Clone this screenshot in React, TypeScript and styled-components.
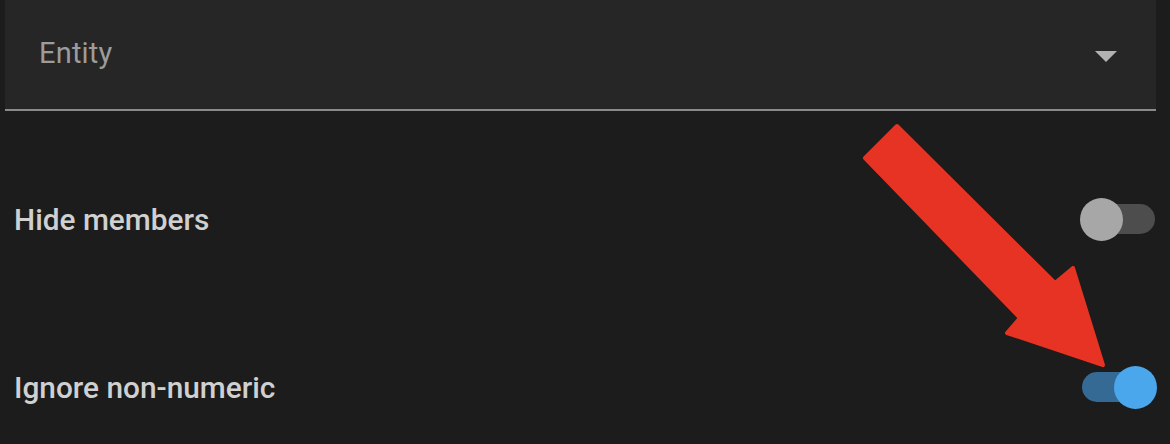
import React from "react";
import styled, { createGlobalStyle } from "styled-components";

const Global = createGlobalStyle`
  html, body { margin: 0; padding: 0; background: #1c1c1c; }
  body { font-family: Roboto, "Liberation Sans", sans-serif; }
  * { box-sizing: border-box; }
`;

const Page = styled.div`
  position: relative;
  width: 1170px;
  height: 444px;
  overflow: hidden;
  background: #1c1c1c;
  display: flex;
  flex-direction: column;
`;

const SelectField = styled.div`
  margin: 0 14px 0 5px;
  height: 111px;
  background: #262626;
  border-bottom: 2px solid #8a8a8a;
  display: flex;
  align-items: center;
  justify-content: space-between;
  padding: 0 39px 3px 34px;
`;

const SelectLabel = styled.span`
  font-size: 29px;
  color: #9c9c9c;
  letter-spacing: 0.2px;
`;

const Caret = styled.span`
  width: 0;
  height: 0;
  border-left: 11px solid transparent;
  border-right: 11px solid transparent;
  border-top: 11px solid #b3b3b3;
  margin-top: 6px;
`;

const Row = styled.div<{ $top: number }>`
  margin-top: ${(p) => p.$top}px;
  height: 60px;
  padding: 0 13px 0 14px;
  display: flex;
  align-items: center;
  justify-content: space-between;
`;

const Label = styled.span`
  font-size: 29.8px;
  font-weight: 500;
  color: #d0d0d0;
`;

const Switch = styled.div<{ $on: boolean }>`
  position: relative;
  width: 77px;
  height: 44px;
  display: flex;
  align-items: center;
  justify-content: ${(p) => (p.$on ? "flex-end" : "flex-start")};
`;

const Track = styled.div<{ $on: boolean }>`
  position: absolute;
  left: 2px;
  right: 2px;
  top: 7px;
  height: 30px;
  border-radius: 15px;
  background: ${(p) => (p.$on ? "#356a95" : "#4d4d4d")};
`;

const Thumb = styled.div<{ $on: boolean }>`
  position: relative;
  width: 43px;
  height: 43px;
  border-radius: 50%;
  background: ${(p) => (p.$on ? "#4aa7ec" : "#a7a7a7")};
`;

const Overlay = styled.svg`
  position: absolute;
  left: 0;
  top: 0;
  pointer-events: none;
`;

function Toggle({ on }: { on: boolean }) {
  return (
    <Switch $on={on}>
      <Track $on={on} />
      <Thumb $on={on} />
    </Switch>
  );
}

export default function App() {
  return (
    <>
      <Global />
      <Page>
        <SelectField>
          <SelectLabel>Entity</SelectLabel>
          <Caret />
        </SelectField>
        <Row $top={78}>
          <Label>Hide members</Label>
          <Toggle on={false} />
        </Row>
        <Row $top={108}>
          <Label>Ignore non-numeric</Label>
          <Toggle on={true} />
        </Row>
        <Overlay width="1170" height="444" viewBox="0 0 1170 444">
          <polygon
            points="897,126 865,158 1020,318 1007,333 1103,365 1073,268 1055,283"
            fill="#e63323"
            stroke="#e63323"
            strokeWidth="4"
            strokeLinejoin="round"
          />
        </Overlay>
      </Page>
    </>
  );
}
